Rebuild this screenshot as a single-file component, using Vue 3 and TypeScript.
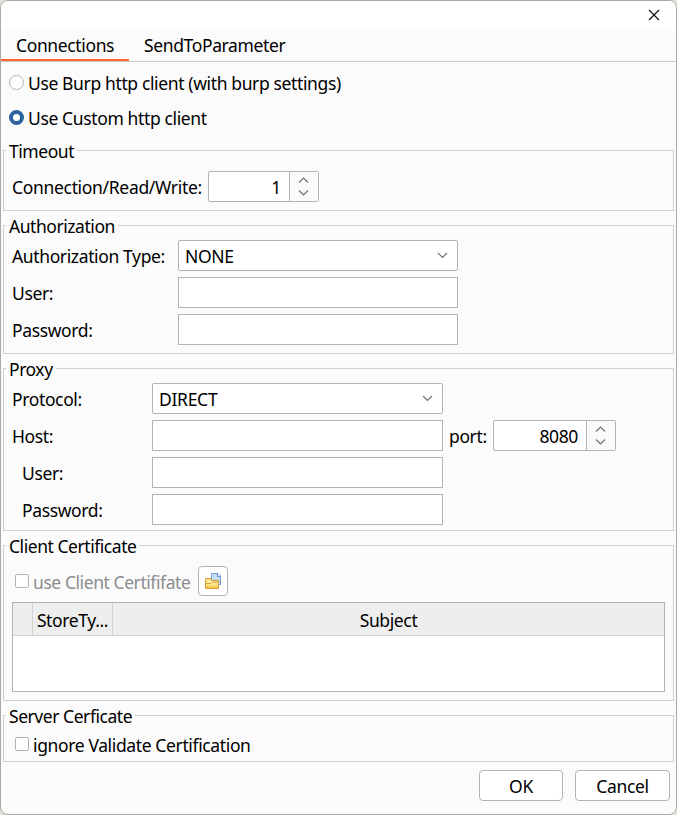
<script setup lang="ts">
import { ref } from 'vue'

const tabs = ['Connections', 'SendToParameter']
const activeTab = ref(0)
const client = ref(1)
const clients = ['Use Burp http client (with burp settings)', 'Use Custom http client']
</script>

<template>
  <div class="window">
    <header class="titlebar">
      <svg class="close" width="12" height="12" viewBox="0 0 12 12"><path d="M1 1L11 11M11 1L1 11" /></svg>
    </header>
    <nav class="tabs">
      <div v-for="(t, i) in tabs" :key="t" class="tab" :class="{ active: i === activeTab }" @click="activeTab = i"><span>{{ t }}</span></div>
    </nav>
    <main>
      <div class="radios">
        <div v-for="(c, i) in clients" :key="c" class="radio" @click="client = i">
          <i class="dot" :class="{ on: i === client }"></i><span>{{ c }}</span>
        </div>
      </div>

      <section class="group timeout">
        <h2>Timeout</h2>
        <div class="row">
          <span class="label">Connection/Read/Write:</span>
          <div class="spinner small">
            <span class="value">1</span>
            <span class="arrows"><svg width="11" height="19" viewBox="0 0 11 19"><path d="M1 5.5L5.5 1L10 5.5M1 13.5L5.5 18L10 13.5" /></svg></span>
          </div>
        </div>
      </section>

      <section class="group auth">
        <h2>Authorization</h2>
        <div class="form">
          <span class="label">Authorization Type:</span>
          <div class="combo"><span>NONE</span><svg width="11" height="7" viewBox="0 0 11 7"><path d="M1 1L5.5 5.5L10 1" /></svg></div>
          <span class="label">User:</span>
          <div class="field"></div>
          <span class="label">Password:</span>
          <div class="field"></div>
        </div>
      </section>

      <section class="group proxy">
        <h2>Proxy</h2>
        <div class="form">
          <span class="label">Protocol:</span>
          <div class="combo"><span>DIRECT</span><svg width="11" height="7" viewBox="0 0 11 7"><path d="M1 1L5.5 5.5L10 1" /></svg></div>
          <span class="label">Host:</span>
          <div class="host">
            <div class="field"></div>
            <span class="label port">port:</span>
            <div class="spinner">
              <span class="value">8080</span>
              <span class="arrows"><svg width="11" height="19" viewBox="0 0 11 19"><path d="M1 5.5L5.5 1L10 5.5M1 13.5L5.5 18L10 13.5" /></svg></span>
            </div>
          </div>
          <span class="label indent">User:</span>
          <div class="field"></div>
          <span class="label indent">Password:</span>
          <div class="field"></div>
        </div>
      </section>

      <section class="group cert">
        <h2>Client Certificate</h2>
        <div class="certline">
          <i class="check"></i><span class="disabled">use Client Certififate</span>
          <button class="open">
            <svg width="18" height="18" viewBox="0 0 18 18">
              <path d="M7.5 1.5H14L16.5 4V12.5H7.5Z" fill="#c5ddf7" stroke="#6f9dd8" />
              <path d="M13.5 1.5V4.5H16.5" fill="#eef6ff" stroke="#5b8fd0" />
              <path d="M1.5 6.5H6.5L7.5 8.5H14.5V16.5H1.5Z" fill="#fbe282" stroke="#dc9b35" />
              <path d="M3 9.5H6L7 11.5H14V10H7.5L7 8.5H3Z" fill="#fff7c9" />
              <path d="M2 11.5H7L8 10.5H14" fill="none" stroke="#dfa541" />
              <path d="M2 14H14V16H2Z" fill="#f5cc4f" />
            </svg>
          </button>
        </div>
        <div class="table">
          <div class="thead"><span></span><span>StoreTy...</span><span>Subject</span></div>
        </div>
      </section>

      <section class="group server">
        <h2>Server Cerficate</h2>
        <div class="certline">
          <i class="check"></i><span>ignore Validate Certification</span>
        </div>
      </section>
    </main>
    <footer>
      <button class="btn ok">OK</button>
      <button class="btn cancel">Cancel</button>
    </footer>
  </div>
</template>

<style>
body { background: #e6e1d8; }
</style>

<style scoped>
* { box-sizing: border-box; }
.window {
  width: 677px; height: 815px;
  border: 1px solid #aaaaa3; border-radius: 8px;
  background: #fbfbfb; color: #000; overflow: hidden;
  font: 17.5px/24px "Noto Sans", sans-serif;
  letter-spacing: -0.37px;
  white-space: nowrap;
}
svg { display: block; flex: none; }
.titlebar { height: 29px; background: #fff; display: flex; justify-content: flex-end; padding: 8px 16px 0 0; }
.close path { stroke: #111; stroke-width: 1.2; fill: none; }
.tabs { height: 32px; display: flex; border-bottom: 1px solid #c8c8c8; }
.tab { height: 31px; padding: 3px 15px 0; }
.tab.active { width: 128px; border-bottom: 2px solid #ff6633; }
main { padding: 0 2px; }
.radios { height: 88px; padding: 9px 6px 0; }
.radio { height: 35px; display: flex; align-items: flex-start; gap: 4px; }
.dot { width: 15px; height: 15px; margin-top: 4px; border: 1px solid #b5b3b3; border-radius: 50%; background: #fff; }
.dot.on { border: 4px solid #2a639d; }
.group { width: 671px; border: 1px solid #cfcfcf; margin-bottom: 14px; padding: 0 8px; }
h2 { font-size: inherit; font-weight: 400; line-height: 24px; letter-spacing: -0.45px; margin: -12px 0 0 -6px; padding: 0 3px; width: max-content; background: #fbfbfb; }
.timeout { height: 61px; }
.auth { height: 129px; }
.proxy { height: 163px; }
.cert { height: 156px; }
.server { height: 47px; margin-bottom: 8px; }
.row { display: flex; margin-top: 8px; }
.label { line-height: 24px; padding-top: 4px; }
.spinner { display: flex; width: 123px; height: 31px; border: 1px solid #b5b1b4; border-radius: 2px; background: #fff; }
.spinner.small { width: 111px; }
.row .label { width: 196px; letter-spacing: -0.32px; }
.value { flex: 1; text-align: right; padding: 3px 8px 0 0; line-height: 24px; }
.arrows { width: 29px; padding-right: 2px; border-left: 1px solid #b5b1b4; background: #fafafa; display: flex; justify-content: center; align-items: center; }
.arrows path, .combo path { fill: none; stroke: #737373; stroke-width: 1.2; }
.form { display: grid; row-gap: 6px; grid-auto-rows: 31px; margin-top: 2px; }
.auth .form { grid-template-columns: 166px 280px; }
.proxy .form { grid-template-columns: 140px 291px; }
.field { height: 31px; border: 1px solid #b5b1b4; background: #fff; }
.combo { height: 31px; border: 1px solid #b5b1b4; border-radius: 2px; background: #fff; display: flex; align-items: center; justify-content: space-between; padding: 0 9px 0 6px; }
.combo span { letter-spacing: -0.3px; }
.host { display: flex; width: 464px; }
.host .field { width: 291px; }
.port { width: 50px; padding-left: 6px; }
.indent { padding-left: 10px; }
.certline { display: flex; padding-left: 3px; height: 30px; margin-top: 8px; }
.check { width: 14px; height: 14px; margin: 8px 4px 0 0; border: 1px solid #b5b3b3; border-radius: 2px; background: #fff; }
.certline > span { padding-top: 4px; }
.disabled { color: #8c8c8c; width: 165px; letter-spacing: -0.43px; }
.open { width: 30px; height: 30px; padding: 0; border: 1px solid #b5b1b4; border-radius: 4px; background: #fff; display: flex; align-items: center; justify-content: center; }
.table { margin-top: 6px; width: 653px; height: 90px; border: 1px solid #b3b3b3; background: #fff; }
.thead { display: grid; grid-template-columns: 20px 80px 1fr; height: 33px; background: #eee; border-bottom: 1px solid #d3d3d3; text-align: center; }
.thead span { border-right: 1px solid #d3d3d3; padding-top: 5px; }
.thead span:last-child { border: 0; }
.server .certline { margin-top: 1px; }
footer { display: flex; justify-content: flex-end; gap: 12px; padding-right: 6px; }
.btn { height: 31px; padding: 0; border: 1px solid #b5b1b4; border-radius: 4px; background: #fff; color: #000; font: inherit; letter-spacing: inherit; }
.ok { width: 84px; }
.cancel { width: 95px; }
</style>
